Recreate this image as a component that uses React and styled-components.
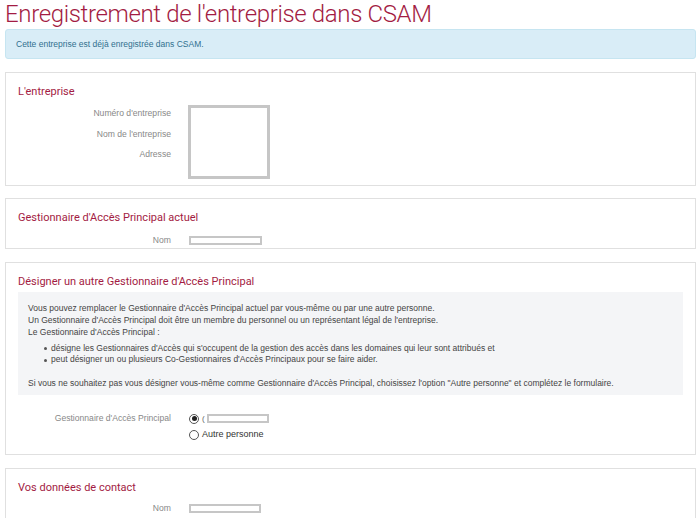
import React from "react";
import styled, { createGlobalStyle } from "styled-components";

const Global = createGlobalStyle`
  html, body { margin: 0; padding: 0; background: #fff; }
  body { font-family: "Liberation Sans", Arial, sans-serif; color: #333; }
`;

const Page = styled.div`
  width: 700px;
  padding: 0 4px 0 5px;
  box-sizing: border-box;
`;

const Title = styled.h1`
  margin: 0;
  padding-top: 1px;
  font-family: Roboto, "Liberation Sans", sans-serif;
  font-weight: 300;
  font-size: 24px;
  line-height: 26px;
  color: #a31c43;
  letter-spacing: -0.35px;
`;

const Alert = styled.div`
  margin-top: 2px;
  height: 30px;
  box-sizing: border-box;
  display: flex;
  align-items: center;
  padding: 0 10px;
  background: #d9edf7;
  border: 1px solid #c6e5f1;
  border-radius: 3px;
  color: #31708f;
  font-size: 8.5px;
`;

const Panel = styled.section`
  margin-top: ${(p) => p.$gap ?? 13}px;
  height: ${(p) => p.$h}px;
  box-sizing: border-box;
  border: 1px solid #e0e0e0;
  padding: 12px 12px 0 12px;
  overflow: hidden;
`;

const PanelTitle = styled.h2`
  margin: 0;
  font-family: Roboto, "Liberation Sans", sans-serif;
  font-weight: 400;
  font-size: 11px;
  line-height: 14px;
  color: #a31c43;
`;

const Rows = styled.div`
  margin-top: ${(p) => p.$mt ?? 6}px;
  display: grid;
  grid-template-columns: 153px 1fr;
  column-gap: 18px;
  row-gap: ${(p) => p.$rg ?? 10}px;
`;

const Label = styled.div`
  text-align: right;
  font-size: 8.6px;
  line-height: 10px;
  color: #888;
`;

const Value = styled.div`
  position: relative;
  font-size: 8.5px;
  line-height: 10px;
  color: #333;
  display: flex;
  align-items: center;
`;

const Redact = styled.span`
  display: inline-block;
  box-sizing: border-box;
  width: ${(p) => p.$w}px;
  height: ${(p) => p.$h}px;
  border: ${(p) => p.$b ?? 2}px solid #c6c6c6;
  background: #fff;
`;

const RedactOverlay = styled(Redact)`
  position: absolute;
  left: -1px;
  top: -3px;
`;

const InfoBox = styled.div`
  margin-top: 3px;
  background: #f4f5f7;
  padding: 11px 10px 6px 10px;
  font-size: 8.5px;
  line-height: 11.5px;
  color: #444;
`;

const P = styled.p`
  margin: 0 0 ${(p) => p.$mb ?? 0}px 0;
`;

const List = styled.ul`
  margin: 4px 0 12px 0;
  padding-left: 23px;
  list-style: none;
  li { position: relative; }
  li::before {
    content: "";
    position: absolute;
    left: -7px;
    top: 4.5px;
    width: 3px;
    height: 3px;
    border-radius: 50%;
    background: #555;
  }
`;

const RadioGroup = styled.div`
  display: flex;
  flex-direction: column;
  gap: 5px;
`;

const RadioRow = styled.label`
  display: flex;
  align-items: center;
  gap: 3px;
  font-size: 9px;
  line-height: 11px;
  color: #333;
`;

const Cut = styled.span`
  color: #666;
  font-size: 8px;
  margin-right: -1px;
`;

const Radio = styled.span`
  width: 10px;
  height: 10px;
  box-sizing: border-box;
  border: 1px solid #555;
  border-radius: 50%;
  display: inline-flex;
  align-items: center;
  justify-content: center;
  background: #fff;
  &::after {
    content: "";
    width: 5px;
    height: 5px;
    border-radius: 50%;
    background: ${(p) => (p.$checked ? "#222" : "transparent")};
  }
`;

export default function App() {
  return (
    <Page>
      <Global />
      <Title>Enregistrement de l'entreprise dans CSAM</Title>
      <Alert>Cette entreprise est déjà enregistrée dans CSAM.</Alert>

      <Panel $h={114} $gap={13}>
        <PanelTitle>L'entreprise</PanelTitle>
        <Rows $mt={9} $rg={10.5}>
          <Label>Numéro d'entreprise</Label>
          <Value>
            <RedactOverlay $w={82} $h={74} $b={3} />
          </Value>
          <Label>Nom de l'entreprise</Label>
          <Value />
          <Label>Adresse</Label>
          <Value />
        </Rows>
      </Panel>

      <Panel $h={51} $gap={12}>
        <PanelTitle>Gestionnaire d'Accès Principal actuel</PanelTitle>
        <Rows $mt={10}>
          <Label>Nom</Label>
          <Value>
            <Redact $w={73} $h={9} />
          </Value>
        </Rows>
      </Panel>

      <Panel $h={193} $gap={13}>
        <PanelTitle>Désigner un autre Gestionnaire d'Accès Principal</PanelTitle>
        <InfoBox>
          <P>
            Vous pouvez remplacer le Gestionnaire d'Accès Principal actuel par vous-même ou par une autre personne.
          </P>
          <P $mb={1}>
            Un Gestionnaire d'Accès Principal doit être un membre du personnel ou un représentant légal de l'entreprise.
          </P>
          <P>Le Gestionnaire d'Accès Principal :</P>
          <List>
            <li>
              désigne les Gestionnaires d'Accès qui s'occupent de la gestion des accès dans les domaines qui leur sont attribués et
            </li>
            <li>peut désigner un ou plusieurs Co-Gestionnaires d'Accès Principaux pour se faire aider.</li>
          </List>
          <P>
            Si vous ne souhaitez pas vous désigner vous-même comme Gestionnaire d'Accès Principal, choisissez l'option "Autre personne" et complétez le formulaire.
          </P>
        </InfoBox>
        <Rows $mt={18}>
          <Label>Gestionnaire d'Accès Principal</Label>
          <RadioGroup>
            <RadioRow>
              <Radio $checked />
              <Cut>(</Cut>
              <Redact $w={62} $h={9} />
            </RadioRow>
            <RadioRow>
              <Radio />
              Autre personne
            </RadioRow>
          </RadioGroup>
        </Rows>
      </Panel>

      <Panel $h={60} $gap={13}>
        <PanelTitle>Vos données de contact</PanelTitle>
        <Rows $mt={8}>
          <Label>Nom</Label>
          <Value>
            <Redact $w={72} $h={9} />
          </Value>
        </Rows>
      </Panel>
    </Page>
  );
}
